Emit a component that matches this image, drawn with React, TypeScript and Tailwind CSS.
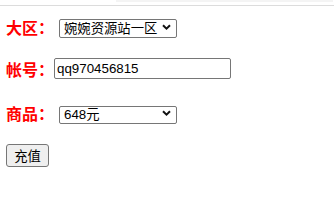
import { useState } from "react"

const labelCls =
  "w-[48px] shrink-0 text-[16px] leading-[20px] font-bold text-[#ff0000] [font-family:'Noto_Sans_CJK_SC',sans-serif]"

const fieldFont = "[font-family:'Liberation_Sans','Noto_Sans_CJK_SC',sans-serif] text-[13.33px]"

function Chevron() {
  return (
    <svg
      className="pointer-events-none absolute right-[6px] top-1/2 -translate-y-1/2"
      width="9"
      height="6"
      viewBox="0 0 9 6"
      fill="none"
    >
      <path d="M1 1.2 4.5 4.6 8 1.2" stroke="#111" strokeWidth="2" />
    </svg>
  )
}

function Dropdown({
  value,
  options,
  onChange,
  height,
}: {
  value: string
  options: string[]
  onChange: (v: string) => void
  height: string
}) {
  return (
    <div className="relative ml-[5px]">
      <select
        value={value}
        onChange={(e) => onChange(e.target.value)}
        className={`${fieldFont} ${height} w-[118px] appearance-none rounded-[2px] border border-[#767676] bg-white pl-[4px] pr-[18px] leading-none text-black outline-none`}
      >
        {options.map((o) => (
          <option key={o} value={o}>
            {o}
          </option>
        ))}
      </select>
      <Chevron />
    </div>
  )
}

export default function App() {
  const [server, setServer] = useState("婉婉资源站一区")
  const [account, setAccount] = useState("qq970456815")
  const [item, setItem] = useState("648元")

  return (
    <div className="h-[202px] w-[334px] overflow-hidden bg-white">
      <div className="ml-[116px] mr-[1px] h-[2px] bg-[#f4f4f4]" />
      <div className="mt-[3px] h-px bg-[#dcdcdc]" />

      <div className="pl-[6px]">
        <div className="mt-[11px] flex h-[19px] items-center">
          <span className={labelCls}>大区：</span>
          <Dropdown
            value={server}
            onChange={setServer}
            height="h-[19px]"
            options={["婉婉资源站一区", "婉婉资源站二区"]}
          />
        </div>

        <div className="mt-[22px] flex h-[21px] items-center">
          <span className={labelCls}>帐号：</span>
          <input
            value={account}
            onChange={(e) => setAccount(e.target.value)}
            className={`${fieldFont} h-[21px] w-[177px] rounded-[2px] border border-[#767676] bg-white px-[2px] text-black outline-none`}
          />
        </div>

        <div className="mt-[25px] flex h-[18px] items-center">
          <span className={labelCls}>商品：</span>
          <Dropdown
            value={item}
            onChange={setItem}
            height="h-[18px]"
            options={["6元", "30元", "98元", "198元", "328元", "648元"]}
          />
        </div>

        <button
          type="button"
          className={`${fieldFont} mt-[22px] h-[23px] w-[43px] rounded-[3px] border border-[#767676] bg-[#efefef] text-black [font-family:'Noto_Sans_CJK_SC',sans-serif]`}
        >
          充值
        </button>
      </div>
    </div>
  )
}
